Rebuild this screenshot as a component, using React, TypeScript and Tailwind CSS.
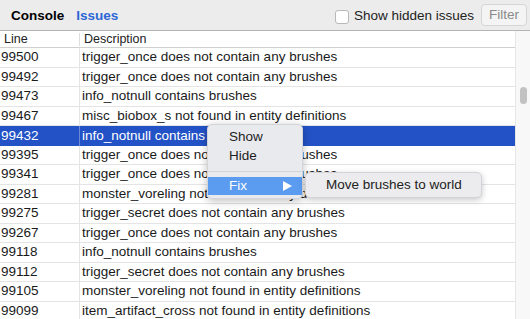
import React from "react";

const rows = [
  ["99500", "trigger_once does not contain any brushes"],
  ["99492", "trigger_once does not contain any brushes"],
  ["99473", "info_notnull contains brushes"],
  ["99467", "misc_biobox_s not found in entity definitions"],
  ["99432", "info_notnull contains brushes"],
  ["99395", "trigger_once does not contain any brushes"],
  ["99341", "trigger_once does not contain any brushes"],
  ["99281", "monster_voreling not found in entity definitions"],
  ["99275", "trigger_secret does not contain any brushes"],
  ["99267", "trigger_once does not contain any brushes"],
  ["99118", "info_notnull contains brushes"],
  ["99112", "trigger_secret does not contain any brushes"],
  ["99105", "monster_voreling not found in entity definitions"],
  ["99099", "item_artifact_cross not found in entity definitions"],
  ["99095", "misc_explobox not found in entity definitions"],
];

export default function App() {
  return (
    <div
      className="relative w-[530px] h-[319px] overflow-hidden bg-white text-[13.5px] text-[#1a1a1a]"
      style={{ fontFamily: '"Liberation Sans", Arial, sans-serif' }}
    >
      {/* toolbar */}
      <div className="flex items-center h-[31px] bg-[#ececec] border-b border-[#b4b4b4] pl-[11px] pr-[3px] pt-[3px]">
        <span className="font-bold text-black">Console</span>
        <span className="ml-[12px] font-bold text-[#2d67d6]">Issues</span>
        <div className="flex-1" />
        <span className="w-[14px] h-[14px] rounded-[3px] border border-[#b9b9b9] bg-white" />
        <span className="ml-[5px] text-[#222]">Show hidden issues</span>
        <button className="ml-[7px] h-[22px] px-[7px] -mt-[3px] rounded-[4px] border border-[#d6d6d6] bg-[#f4f4f4] text-[#8a8a8a]">
          Filter
        </button>
      </div>

      <div className="flex h-[288px]">
        <div className="flex-1 flex flex-col">
          {/* header */}
          <div className="flex h-[17px] items-center bg-white border-b border-[#d0d0d0] text-[12.5px] text-[#222]">
            <div className="w-[79px] pl-[4px]">Line</div>
            <div className="h-[13px] w-px bg-[#dedede]" />
            <div className="pl-[4px]">Description</div>
          </div>
          {rows.map(([line, desc]) => {
            const sel = line === "99432";
            return (
              <div
                key={line}
                className={
                  sel
                    ? "flex h-[19.5px] shrink-0 items-center bg-[#2352c6] text-white"
                    : "flex h-[19.5px] shrink-0 items-center border-b border-[#e4e4e4]"
                }
              >
                <div className="w-[79px] pl-[1px]">{line}</div>
                <div className={sel ? "h-full w-px bg-[#6a8ad8]" : "h-full w-px bg-[#e4e4e4]"} />
                <div className="pl-[2px] whitespace-nowrap">{desc}</div>
              </div>
            );
          })}
        </div>
        {/* scrollbar */}
        <div className="w-[15px] bg-[#f8f8f8] border-l border-[#e6e6e6] pt-[56px] flex justify-center">
          <div className="w-[7px] h-[17px] rounded-full bg-[#c2c2c2]" />
        </div>
      </div>

      {/* context menu */}
      <div className="absolute left-[207px] top-[124px] w-[96px] rounded-[5px] bg-[#e9eaee] shadow-[0_2px_8px_rgba(0,0,0,0.25)] border border-[#d3d3d8] py-[3px] text-[#1d1d1d]">
        <div className="h-[19px] pl-[21px] flex items-center">Show</div>
        <div className="h-[19px] pl-[21px] flex items-center">Hide</div>
        <div className="my-[5px] h-px bg-[#d4d4d8]" />
        <div className="h-[18px] pl-[21px] pr-[10px] flex items-center justify-between bg-[#5b9bf0] text-white">
          <span>Fix</span>
          <svg width="9" height="10" viewBox="0 0 9 10">
            <path d="M0 0 L9 5 L0 10 Z" fill="white" />
          </svg>
        </div>
      </div>

      {/* submenu */}
      <div className="absolute left-[305px] top-[172px] w-[177px] h-[26px] rounded-[5px] bg-[#ececee] shadow-[0_2px_6px_rgba(0,0,0,0.22)] border border-[#d3d3d8] flex items-center pl-[20px] text-[#222]">
        Move brushes to world
      </div>
    </div>
  );
}
